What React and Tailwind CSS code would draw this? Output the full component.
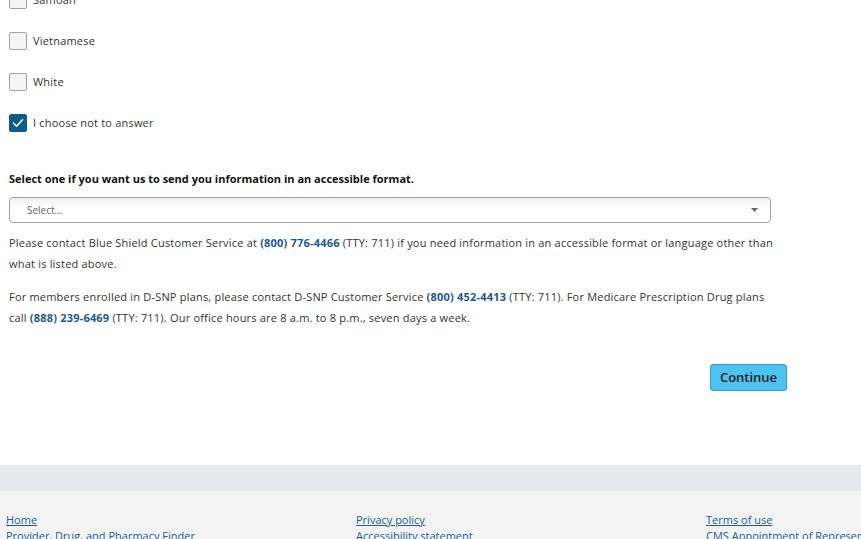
import { useState } from "react";

const options = ["Samoan", "Vietnamese", "White", "I choose not to answer"];

function Checkbox({ label, checked, onToggle }) {
  return (
    <label className="flex items-center h-[18px] mb-[23px] cursor-pointer">
      <span
        onClick={onToggle}
        className={`w-[18px] h-[18px] rounded-[2px] border flex items-center justify-center shrink-0 ${
          checked ? "bg-[#0f5b8e] border-[#0f5b8e]" : "bg-[#f4f4f4] border-[#a3a3a3]"
        }`}
      >
        {checked && (
          <svg width="12" height="10" viewBox="0 0 12 10" fill="none">
            <path d="M1.5 5.2 4.6 8.2 10.5 1.8" stroke="#fff" strokeWidth="1.6" strokeLinecap="round" strokeLinejoin="round" />
          </svg>
        )}
      </span>
      <span className="ml-[6px] text-[11px] tracking-[0.2px] text-[#333]">{label}</span>
    </label>
  );
}

const Phone = ({ children }) => <span className="font-bold text-[#1c5a8c]">{children}</span>;

export default function App() {
  const [picked, setPicked] = useState({ "I choose not to answer": true });

  return (
    <div className="h-[539px] overflow-hidden bg-white font-['Open_Sans',sans-serif] text-[#333]">
      <div className="pl-[9px] -mt-[9px]">
        {options.map((o) => (
          <Checkbox
            key={o}
            label={o}
            checked={!!picked[o]}
            onToggle={() => setPicked((p) => ({ ...p, [o]: !p[o] }))}
          />
        ))}

        <h3 className="mt-[40px] text-[11px] font-bold text-[#111] leading-[14px]">
          Select one if you want us to send you information in an accessible format.
        </h3>

        <div className="mt-[11px] w-[762px] h-[26px] rounded-[4px] border border-[#a0a0a0] bg-gradient-to-b from-[#f0f0f0] to-white to-[40%] flex items-center justify-between pl-[17px] pr-[12px]">
          <span className="text-[10px] text-[#666]">Select...</span>
          <svg width="7" height="4" viewBox="0 0 7 4">
            <path d="M0 0h7L3.5 4z" fill="#666" />
          </svg>
        </div>

        <p className="mt-[9px] w-[775px] text-[11px] leading-[21px] tracking-[0.2px]">
          Please contact Blue Shield Customer Service at <Phone>(800) 776-4466</Phone> (TTY: 711) if you need
          information in an accessible format or language other than what is listed above.
        </p>

        <p className="mt-[12px] w-[775px] text-[11px] leading-[21px] tracking-[0.2px]">
          For members enrolled in D-SNP plans, please contact D-SNP Customer Service <Phone>(800) 452-4413</Phone> (TTY:
          711). For Medicare Prescription Drug plans call <Phone>(888) 239-6469</Phone> (TTY: 711). Our office hours are
          8 a.m. to 8 p.m., seven days a week.
        </p>

        <div className="w-[778px] flex justify-end mt-[36px]">
          <button className="w-[77px] h-[27px] rounded-[3px] bg-[#4ec3f2] border border-[#2a9fd8] text-[13px] font-semibold text-[#1a1a1a]">
            Continue
          </button>
        </div>
      </div>

      <div className="mt-[74px] h-[26px] bg-[#e8e9ed]" />

      <footer className="bg-[#f3f3f3] pt-[21px] pb-[20px] pl-[6px] flex text-[11px] leading-[16px] whitespace-nowrap">
        <div className="w-[350px] shrink-0 flex flex-col">
          <a className="underline text-[#1c5f94]">Home</a>
          <a className="text-[#1c5f94]">Provider, Drug, and Pharmacy Finder</a>
        </div>
        <div className="w-[350px] shrink-0 flex flex-col">
          <a className="underline text-[#1c5f94]">Privacy policy</a>
          <a className="text-[#1c5f94]">Accessibility statement</a>
        </div>
        <div className="shrink-0 flex flex-col">
          <a className="underline text-[#1c5f94]">Terms of use</a>
          <a className="text-[#1c5f94]">CMS Appointment of Representative</a>
        </div>
      </footer>
    </div>
  );
}
